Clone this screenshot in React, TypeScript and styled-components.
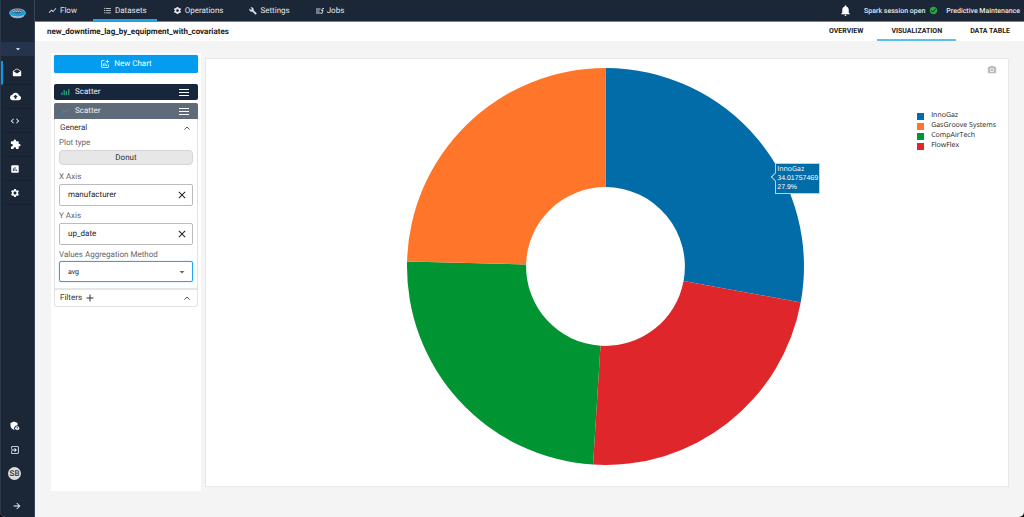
import React from "react";
import styled, { createGlobalStyle, css } from "styled-components";
import {
  MdShowChart, MdFormatListBulleted, MdSettings, MdBuild, MdNotifications, MdCheckCircle,
  MdDrafts, MdBackup, MdCode, MdExtension, MdAssessment, MdExitToApp, MdArrowForward,
  MdArrowDropDown, MdOutlineAddchart, MdCameraAlt, MdClose, MdAdd,
} from "react-icons/md";

const Global = createGlobalStyle`
  *, *::before, *::after { box-sizing: border-box; }
  body { margin: 0; background: #000; font: 8px/10px Roboto, sans-serif; color: #333; text-rendering: geometricPrecision; }
  button, input, select { font: inherit; color: inherit; margin: 0; text-rendering: inherit; }
  button { cursor: pointer; padding: 0; border: 0; background: none; }
  a { color: inherit; text-decoration: none; }
  svg { display: block; flex: none; }
`;

const navy = "#1b2637";
const blue = "#039cee";

const Shell = styled.div`
  display: flex;
  min-height: 100vh;
  background: #f4f4f4;
  border-radius: 0 0 5px 5px;
  overflow: hidden;
`;

const Sidebar = styled.nav`
  flex: 0 0 35px;
  display: flex;
  flex-direction: column;
  background: ${navy};
  border-left: 1px solid #2c394a;
  border-right: 1px solid #3a4556;
  color: #fff;
`;
const LogoLink = styled.a`
  height: 42px;
  padding: 7px 0 0 8px;
`;
const Picker = styled.button`
  height: 14px;
  display: grid;
  place-items: center;
  background: #25344c;
  color: #fff;
  margin-bottom: 5px;
`;
const SideLink = styled.a<{ $active?: boolean; $plain?: boolean }>`
  height: 24px;
  display: flex;
  align-items: center;
  padding-left: 9px;
  border-bottom: 1px solid ${(p) => (p.$plain ? "transparent" : "#172131")};
  ${(p) => p.$active && css`
    border-left: 2px solid ${blue};
  `}
`;
const SideFoot = styled.div`
  margin-top: auto;
  display: flex;
  flex-direction: column;
`;
const Avatar = styled.span`
  width: 13px;
  height: 13px;
  margin-left: -2px;
  border-radius: 50%;
  background: #ddd;
  color: #333;
  font-weight: 500;
  line-height: 13px;
  text-align: center;
`;
const Expand = styled.button`
  height: 22px;
  margin-top: 9px;
  padding-left: 11px;
  display: flex;
  align-items: center;
  color: #fff;
`;

const Page = styled.div`
  flex: 1;
  min-width: 0;
  display: flex;
  flex-direction: column;
`;
const TopBar = styled.header`
  height: 22px;
  display: flex;
  justify-content: space-between;
  background: ${navy};
  color: #e4e7eb;
  border-bottom: 1px solid #777f8a;
  padding: 0 4px 0 3px;
`;
const TopNav = styled.nav`
  display: flex;
  gap: 6px;
`;
const TopLink = styled.a<{ $active?: boolean }>`
  display: flex;
  align-items: center;
  gap: 3px;
  padding: 2px 10px 0;
  border-bottom: 2px solid ${(p) => (p.$active ? "#1da6ea" : "transparent")};
`;
const Status = styled.div`
  display: flex;
  align-items: center;
  gap: 8px;
  font-size: 7px;
  font-weight: 500;
`;
const Session = styled.span`
  display: flex;
  align-items: center;
  gap: 4px;
  margin-left: 4px;
`;
const IconButton = styled.button`
  display: grid;
  place-items: center;
`;
const SubBar = styled.div`
  height: 19px;
  display: flex;
  justify-content: space-between;
  background: #fff;
  padding-left: 12px;
`;
const Title = styled.h1`
  margin: 0;
  font-size: 8px;
  line-height: 19px;
  font-weight: 700;
  color: #222;
`;
const Tabs = styled.nav`
  display: flex;
`;
const Tab = styled.a<{ $active?: boolean }>`
  padding: 0 14px;
  font-size: 7px;
  line-height: 19px;
  font-weight: 700;
  color: #222;
  box-shadow: inset 0 -2px ${(p) => (p.$active ? "#5ac0f2" : "transparent")};
`;

const Workspace = styled.main`
  flex: 1;
  display: flex;
  gap: 4px;
  padding: 12px 15px 26px 16px;
`;
const Controls = styled.aside`
  flex: 0 0 150px;
  min-width: 0;
  padding: 2px 3px;
  background: #fff;
`;
const NewChart = styled.button`
  width: 100%;
  height: 18px;
  display: flex;
  align-items: center;
  justify-content: center;
  gap: 4px;
  border-radius: 2px;
  background: ${blue};
  color: #fff;
  margin-bottom: 11px;
  box-shadow: 0 0 1px ${blue};
`;
const ChartHead = styled.div<{ $current?: boolean }>`
  height: 16px;
  display: flex;
  align-items: center;
  gap: 5px;
  padding: 0 9px 0 7px;
  margin-bottom: ${(p) => (p.$current ? 0 : 3)}px;
  border-radius: ${(p) => (p.$current ? "2px 2px 0 0" : "2px")};
  background: ${(p) => (p.$current ? "#5f6b79" : "#17263b")};
  color: #eceef1;
`;
const Grow = styled.span`
  flex: 1;
`;
const Card = styled.section`
  border: 1px solid #e2e2e2;
  border-top: 0;
  border-radius: 0 0 3px 3px;
`;
const SectionHead = styled.div`
  height: 17px;
  display: flex;
  align-items: center;
  gap: 2px;
  padding: 0 7px 0 5px;
`;
const Filters = styled(SectionHead)`
  border-top: 2px solid #e6e6e6;
  height: 18px;
`;
const Fields = styled.div`
  padding: 1px 4px 6px;
  color: #666;
`;
const Label = styled.label`
  display: block;
  line-height: 12px;
`;
const PlotType = styled.button`
  display: block;
  width: 100%;
  height: 15px;
  margin: 1px 0 6px;
  border: 1px solid #d5d5d5;
  border-radius: 4px;
  background: #e7e7e7;
  color: #333;
`;
const Field = styled.div<{ $focus?: boolean }>`
  height: ${(p) => (p.$focus ? 21 : 22)}px;
  display: flex;
  align-items: center;
  margin: ${(p) => (p.$focus ? "0" : "1px 0 4px")};
  padding: 0 4px 0 8px;
  border: 1px solid ${(p) => (p.$focus ? "#22a7f0" : "#bbb")};
  border-radius: 2px;
  box-shadow: ${(p) => (p.$focus ? "0 0 1px #22a7f0" : "none")};
  color: #222;
`;
const TextInput = styled.input`
  flex: 1;
  min-width: 0;
  border: 0;
  padding: 0;
  outline: 0;
  background: none;
`;
const Select = styled.select`
  flex: 1;
  min-width: 0;
  border: 0;
  padding: 0;
  outline: 0;
  appearance: none;
  background: none;
  font-size: 7px;
`;

const Panel = styled.section`
  position: relative;
  flex: 1;
  min-width: 0;
  margin: 5px 0 4px;
  padding: 9px 12px 9px 9px;
  display: grid;
  grid-template-columns: minmax(0, 1fr) minmax(0, 397px) minmax(0, 1fr);
  align-items: start;
  background: #fff;
  border: 1px solid #e8e8e8;
`;
const Camera = styled.button`
  position: absolute;
  top: 6px;
  right: 11px;
  color: #bbb;
`;
const Donut = styled.figure`
  position: relative;
  grid-column: 2;
  margin: 0;
  svg { width: 100%; height: auto; }
`;
const Tip = styled.div`
  position: absolute;
  left: 92%;
  top: 24%;
  margin-left: 3px;
  padding: 1px;
  border: 1px solid #b3d3e8;
  background: #026ca8;
  color: #fff;
  font: 7px/9px "Liberation Sans", Arial, sans-serif;
  &::before {
    content: "";
    position: absolute;
    left: -4px;
    top: 10px;
    width: 6px;
    height: 6px;
    background: #026ca8;
    border: solid #b3d3e8;
    border-width: 0 0 1px 1px;
    transform: rotate(45deg);
  }
`;
const TipName = styled.div`
  font-family: "Open Sans", Verdana, sans-serif;
`;
const Legend = styled.ul`
  justify-self: end;
  list-style: none;
  margin: 43px 0 0;
  padding: 0;
  font: 7px/10px "Open Sans", Verdana, sans-serif;
  color: #222;
`;
const LegendItem = styled.li`
  display: flex;
  align-items: center;
  gap: 7px;
`;
const Swatch = styled.span<{ $color: string }>`
  width: 7px;
  height: 7px;
  background: ${(p) => p.$color};
`;

const series = [
  { name: "InnoGaz", share: 0.279, color: "#026ca8" },
  { name: "FlowFlex", share: 0.231, color: "#df262a" },
  { name: "CompAirTech", share: 0.244, color: "#009432" },
  { name: "GasGroove Systems", share: 0.246, color: "#ff762a" },
];
const legendOrder = [0, 3, 2, 1];

const point = (r: number, t: number) =>
  `${200 + r * Math.sin(2 * Math.PI * t)} ${200 - r * Math.cos(2 * Math.PI * t)}`;

function DonutChart() {
  let from = 0;
  return (
    <svg viewBox="0 0 400 400" role="img" aria-label="Average up_date by manufacturer">
      {series.map((s) => {
        const a = from;
        const b = (from += s.share);
        return (
          <path
            key={s.name}
            fill={s.color}
            d={`M${point(200, a)}A200 200 0 0 1 ${point(200, b)}L${point(80, b)}A80 80 0 0 0 ${point(80, a)}Z`}
          />
        );
      })}
    </svg>
  );
}

const Logo = () => (
  <svg width="17" height="13" viewBox="0 0 17 13">
    <ellipse cx="8.5" cy="6" rx="8.2" ry="4.6" fill="#b5cedc" />
    <ellipse cx="8.5" cy="4.6" rx="5.4" ry="2.8" fill="#3f6275" />
    <path d="M4 4.4h9M5 3h7" stroke="#dbe8ee" strokeWidth="0.8" strokeDasharray="1.6 0.7" />
    <path d="M0.4 6C1 4 2.4 3.4 3.4 3C2.2 7.6 14.8 7.6 13.6 3C15 3.6 16 4.4 16.6 6C16.4 8 13 9.4 8.5 9.4S0.6 8 0.4 6Z" fill="#18a0df" />
    <path d="M2 8.8C5 11.4 12 11.4 15 8.8" stroke="#b7c8d2" strokeWidth="1" fill="none" />
  </svg>
);
const JobsIcon = () => (
  <svg width="8" height="8" viewBox="0 0 16 16" fill="none" stroke="currentColor" strokeWidth="1.8">
    <path d="M0 4h9M0 8h7M0 12h9M16 3h-3l-2 4h3l-2 6M9 12l3 1" />
  </svg>
);
const ShieldGear = () => (
  <svg width="10" height="10" viewBox="0 0 20 20">
    <path d="M8 1l7 3v5a6 6 0 0 0-6 9C4 17 1 13 1 9V4z" fill="#fff" />
    <circle cx="14.5" cy="14.5" r="4" fill="#fff" />
    <circle cx="14.5" cy="13.2" r="1.2" fill={navy} />
    <path d="M12.3 16.6q2.2-2 4.4 0" stroke={navy} fill="none" />
  </svg>
);
const BarsIcon = () => (
  <svg width="9" height="8" viewBox="0 0 9 8">
    <path d="M1 7V4.5M5.4 7V3" stroke="#169bb8" strokeWidth="1.3" />
    <path d="M3.2 7V2M7.8 7V1" stroke="#2aa55b" strokeWidth="1.3" />
  </svg>
);
const LineIcon = () => (
  <svg width="9" height="8" viewBox="0 0 9 8" fill="none" stroke="#3a8fb5">
    <path d="M1 6l2-2 2 1 3-3" />
  </svg>
);
const Bars = () => (
  <svg width="10" height="8" viewBox="0 0 10 8" stroke="#fff">
    <path d="M0 1.5h10M0 4.5h10M0 7.5h10" />
  </svg>
);
const Chevron = () => (
  <svg width="6" height="4" viewBox="0 0 6 4" fill="none" stroke="#555">
    <path d="M0.4 3.6L3 1l2.6 2.6" />
  </svg>
);

const sideLinks = [
  { label: "Project", icon: <MdDrafts size={10} />, active: true },
  { label: "Upload", icon: <MdBackup size={11} /> },
  { label: "Code", icon: <MdCode size={10} /> },
  { label: "Plugins", icon: <MdExtension size={11} /> },
  { label: "Reports", icon: <MdAssessment size={10} /> },
  { label: "Settings", icon: <MdSettings size={10} /> },
];

const topLinks = [
  { label: "Flow", icon: <MdShowChart size={9} /> },
  { label: "Datasets", icon: <MdFormatListBulleted size={9} />, active: true },
  { label: "Operations", icon: <MdSettings size={9} /> },
  { label: "Settings", icon: <MdBuild size={8} /> },
  { label: "Jobs", icon: <JobsIcon /> },
];

export default function App() {
  return (
    <>
      <Global />
      <Shell>
        <Sidebar>
          <LogoLink href="#" aria-label="Home"><Logo /></LogoLink>
          <Picker aria-label="Choose project"><MdArrowDropDown size={10} /></Picker>
          {sideLinks.map((l) => (
            <SideLink key={l.label} href="#" aria-label={l.label} $active={l.active}>{l.icon}</SideLink>
          ))}
          <SideFoot>
            <SideLink href="#" aria-label="Admin" $plain><ShieldGear /></SideLink>
            <SideLink href="#" aria-label="Sign out" $plain><MdExitToApp size={10} /></SideLink>
            <SideLink href="#" $plain><Avatar>SB</Avatar></SideLink>
            <Expand aria-label="Expand menu"><MdArrowForward size={10} /></Expand>
          </SideFoot>
        </Sidebar>
        <Page>
          <TopBar>
            <TopNav>
              {topLinks.map((l) => (
                <TopLink key={l.label} href="#" $active={l.active}>{l.icon}{l.label}</TopLink>
              ))}
            </TopNav>
            <Status>
              <IconButton aria-label="Notifications"><MdNotifications size={13} color="#fff" /></IconButton>
              <Session>Spark session open <MdCheckCircle size={9} color="#27a844" /></Session>
              <span>Predictive Maintenance</span>
            </Status>
          </TopBar>
          <SubBar>
            <Title>new_downtime_lag_by_equipment_with_covariates</Title>
            <Tabs>
              <Tab href="#">OVERVIEW</Tab>
              <Tab href="#" $active>VISUALIZATION</Tab>
              <Tab href="#">DATA TABLE</Tab>
            </Tabs>
          </SubBar>
          <Workspace>
            <Controls>
              <NewChart><MdOutlineAddchart size={10} />New Chart</NewChart>
              <ChartHead>
                <BarsIcon /><Grow>Scatter</Grow>
                <IconButton aria-label="Chart menu"><Bars /></IconButton>
              </ChartHead>
              <ChartHead $current>
                <LineIcon /><Grow>Scatter</Grow>
                <IconButton aria-label="Chart menu"><Bars /></IconButton>
              </ChartHead>
              <Card>
                <SectionHead>
                  <Grow>General</Grow>
                  <IconButton aria-label="Collapse general"><Chevron /></IconButton>
                </SectionHead>
                <Fields>
                  <Label htmlFor="plot">Plot type</Label>
                  <PlotType id="plot">Donut</PlotType>
                  <Label htmlFor="x">X Axis</Label>
                  <Field>
                    <TextInput id="x" defaultValue="manufacturer" />
                    <IconButton aria-label="Clear X axis"><MdClose size={12} /></IconButton>
                  </Field>
                  <Label htmlFor="y">Y Axis</Label>
                  <Field>
                    <TextInput id="y" defaultValue="up_date" />
                    <IconButton aria-label="Clear Y axis"><MdClose size={12} /></IconButton>
                  </Field>
                  <Label htmlFor="agg">Values Aggregation Method</Label>
                  <Field $focus>
                    <Select id="agg" defaultValue="avg"><option>avg</option></Select>
                    <MdArrowDropDown size={12} color="#666" />
                  </Field>
                </Fields>
                <Filters>
                  <span>Filters</span>
                  <IconButton aria-label="Add filter"><MdAdd size={12} /></IconButton>
                  <Grow />
                  <IconButton aria-label="Collapse filters"><Chevron /></IconButton>
                </Filters>
              </Card>
            </Controls>
            <Panel>
              <Donut>
                <DonutChart />
                <Tip>
                  <TipName>InnoGaz</TipName>
                  <div>34.01757469</div>
                  <div>27.9%</div>
                </Tip>
              </Donut>
              <Legend>
                {legendOrder.map((i) => (
                  <LegendItem key={series[i].name}>
                    <Swatch $color={series[i].color} />{series[i].name}
                  </LegendItem>
                ))}
              </Legend>
              <Camera aria-label="Download plot as a png"><MdCameraAlt size={10} /></Camera>
            </Panel>
          </Workspace>
        </Page>
      </Shell>
    </>
  );
}
